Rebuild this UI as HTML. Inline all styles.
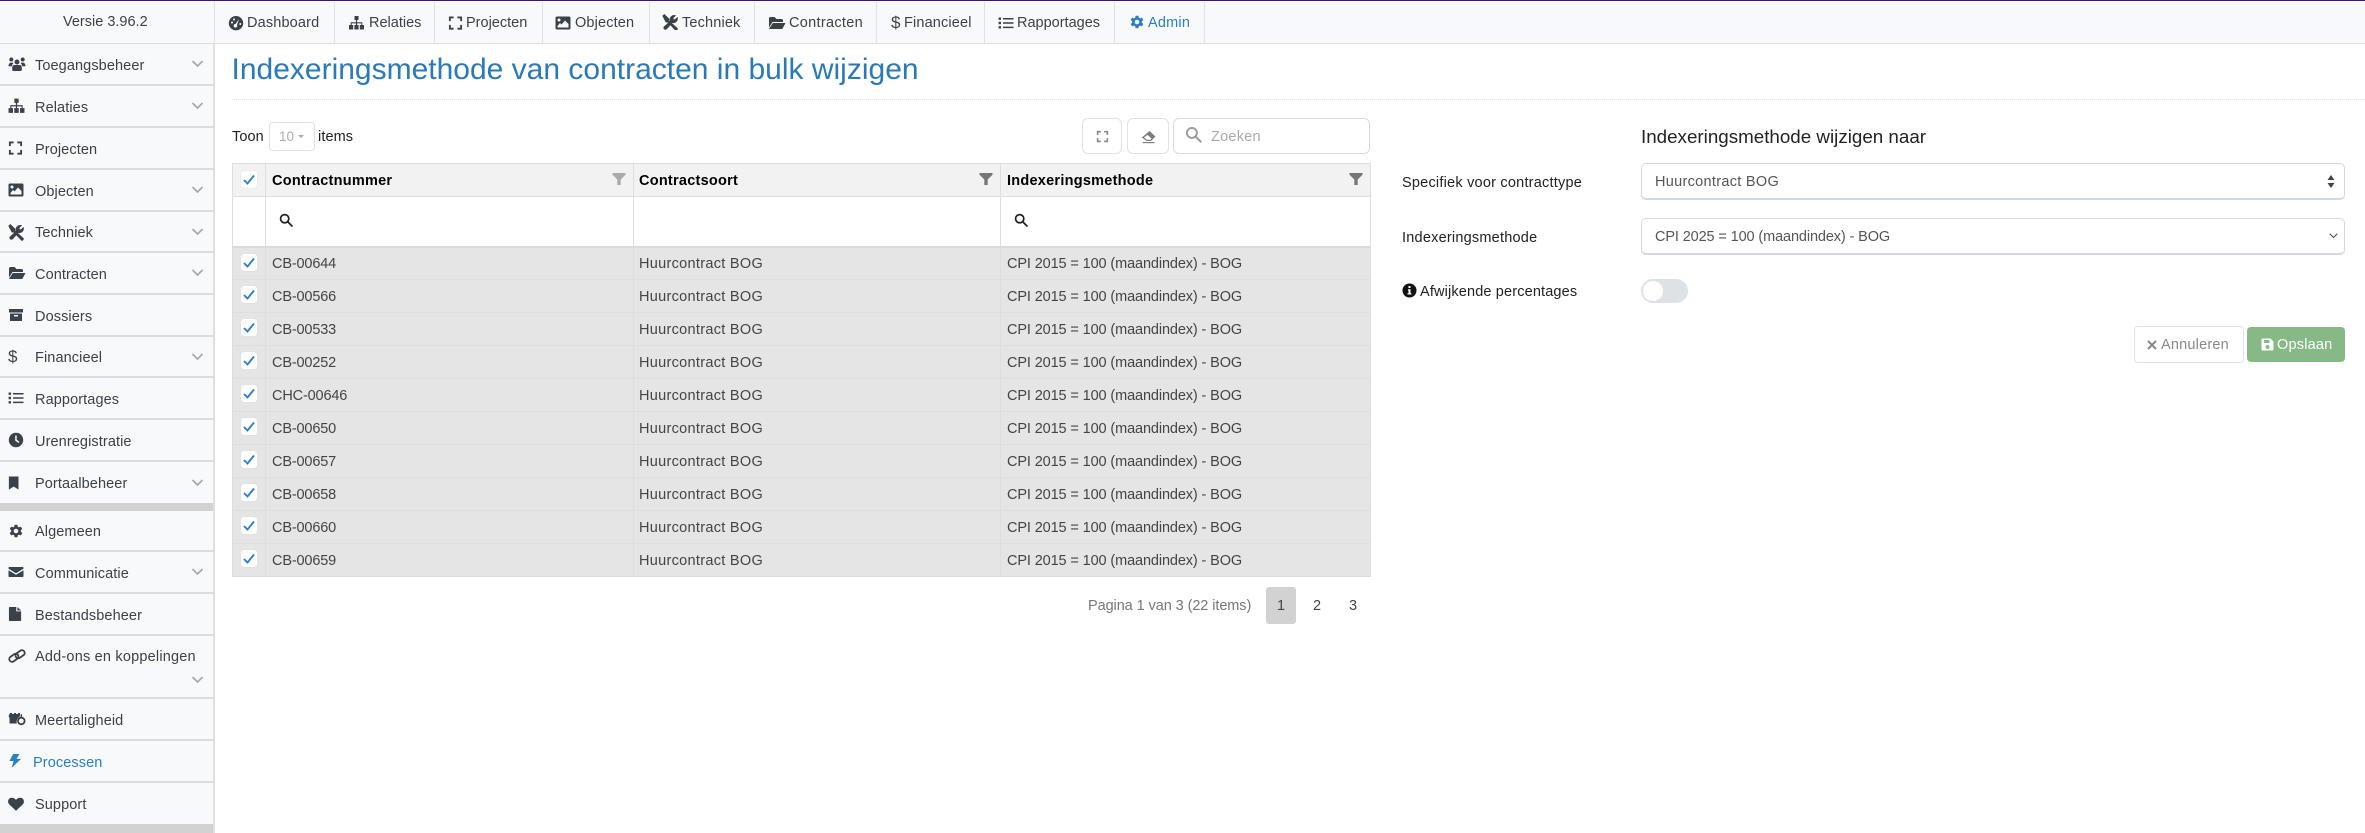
<!DOCTYPE html>
<html lang="nl"><head><meta charset="utf-8"><title>Indexeringsmethode van contracten in bulk wijzigen</title>
<style>
*{box-sizing:border-box}
html,body{margin:0;padding:0;width:2365px;height:833px;overflow:hidden;background:#fff;font-family:"Liberation Sans",sans-serif;font-size:14.5px;color:#3c4148}
.a{position:absolute;white-space:nowrap}
svg{display:block}
.ic{position:absolute;fill:currentColor}
#top{position:absolute;left:0;top:0;width:2365px;height:44px;background:#f8f9fb;border-top:1px solid #3a1678;border-bottom:1px solid #dcdcdc}
.nv{position:absolute;top:1px;height:42px;border-right:1px solid #e2e2e2;line-height:42px;color:#3c4148}
.nv span{position:absolute;top:0}
.nv svg{position:absolute;top:13px}
#side{position:absolute;left:0;top:44px;width:215px;height:789px;background:#f8f9fb;border-right:2px solid #e0e0e0}
.si{position:absolute;left:0;width:213px;border-bottom:2px solid #dcdcdc;color:#3c4148;letter-spacing:.1px}
.si span{position:absolute;left:35px;top:50%;margin-top:-9.5px;line-height:22px}
.si svg.ic{left:8px;top:50%;margin-top:-9px}
.si svg.ch{position:absolute;left:191px;top:50%;margin-top:-4px;fill:none;stroke:#a8a8a8;stroke-width:1.7}
.band{position:absolute;left:0;width:213px;background:#d2d2d2}
table{position:absolute;left:232px;top:163px;width:1138px;border-collapse:collapse;table-layout:fixed;color:#444}
td,th{padding:1px 0 0 6px;border:1px solid #dedede;height:33px;font-weight:normal;text-align:left;position:relative;white-space:nowrap}
th{background:#f2f2f2;color:#000;font-weight:bold;height:33px;letter-spacing:.25px;padding-top:2px}
tr.f td{height:50px;background:#fff;border-bottom:2px solid #dadada}
tr.r td{background:#e5e5e5}
tr.r td:nth-child(2){letter-spacing:-.15px}
tr.r td:nth-child(3){letter-spacing:.3px;padding-left:5px}
tr.r td:nth-child(4){letter-spacing:-.12px}
th:nth-child(3){padding-left:5px}
.cb{position:absolute;left:8px;top:6px;width:16px;height:17px;background:#fff;border-radius:3px;box-shadow:0 0 1px #ccc}
th .cb{top:7px}
.cb svg{position:absolute;left:2px;top:3px;fill:none;stroke:#2f7fc4;stroke-width:1.9}
.fi{position:absolute;top:8px;right:7px;fill:#777}
.se{position:absolute;left:13px;top:16px;fill:none;stroke:#222;stroke-width:2}
.box{position:absolute;background:#fff;border:1px solid #dfe2e6;border-radius:6px}
.sel{position:absolute;left:1641px;width:704px;height:37px;background:#fff;border:1px solid #d3d8de;border-bottom-width:2px;border-radius:5px;line-height:36px;padding-left:13px;color:#555}
.lb{position:absolute;left:1402px;color:#222;line-height:20px;letter-spacing:.22px}
</style></head><body>
<svg width="0" height="0" style="position:absolute"><defs>
<symbol id="dash" viewBox="0 0 16 16"><path fill-rule="evenodd" d="M8 1a7.2 7.2 0 1 1 0 14.4A7.2 7.2 0 0 1 8 1zM11 4.2 7.4 9a1.8 1.8 0 1 0 1.6.9zM4 6.5a1 1 0 1 0 0 2 1 1 0 0 0 0-2zM6 3.5a1 1 0 1 0 0 2 1 1 0 0 0 0-2zM12.3 8a1 1 0 1 0 0 2 1 1 0 0 0 0-2z"/></symbol>
<symbol id="site" viewBox="0 0 16 16"><path d="M6 1h4v4H8.6v2.2h5.2V10h1.7v4.5h-4.2V10h1.5V8.4H8.6V10h1.5v4.5H5.9V10h1.5V8.4H3.2V10h1.500v4.500H.5V10h1.700V7.200h5.200V5H6z"/></symbol>
<symbol id="exp" viewBox="0 0 16 16"><path d="M1 1h5v2H3v3H1zM10 1h5v5h-2V3h-3zM1 10h2v3h3v2H1zM13 10h2v5h-5v-2h3z"/></symbol>
<symbol id="img" viewBox="0 0 16 16"><path fill-rule="evenodd" d="M2 1.500h12A1.500 1.500 0 0 1 15.500 3v10a1.500 1.500 0 0 1-1.500 1.500H2A1.500 1.500 0 0 1 .5 13V3A1.500 1.500 0 0 1 2 1.500zM4 3.500a1.500 1.500 0 1 0 0 3 1.500 1.500 0 0 0 0-3zM10 5.500 6.500 9.500 5 8l-2.500 3v1.500h11V9z"/></symbol>
<symbol id="tools" viewBox="0 0 16 16"><path stroke="currentColor" stroke-width=".8" d="M.8 2 2.300.6 7 5l.1 2.100L15 14.200a1.200 1.200 0 0 1-1.800 1.600L6 8.200 4 8zM15.300 3.600a4 4 0 0 1-5 4.900L4.600 14.800a1.500 1.500 0 1 1-2.400-2l6.400-5.600a4 4 0 0 1 4.800-5.600L11 3.800l.3 1.700 1.700.3z"/></symbol>
<symbol id="fold" viewBox="0 0 18 16"><path d="M1 3.500C1 2.700 1.700 2 2.500 2h4l2 2h5c.8 0 1.500.7 1.500 1.500V7H4.500L1 12.500zM4.800 8H17.500l-3.200 6H.9z"/></symbol>
<symbol id="arch" viewBox="0 0 16 16"><path fill-rule="evenodd" d="M1 2h14v3.500H1zM2 6.500h12V14H2zM6 8v1.500h4V8z"/></symbol>
<symbol id="list" viewBox="0 0 16 16"><path d="M.6 2.500h2.400v2.400H.6zM.6 6.800h2.400v2.400H.6zM.6 11.100h2.400v2.400H.6zM5 3h10.500v1.500H5zM5 7.300h10.500v1.500H5zM5 11.600h10.500v1.500H5z"/></symbol>
<symbol id="clock" viewBox="0 0 16 16"><path fill-rule="evenodd" d="M8 .8a7.200 7.200 0 1 1 0 14.400A7.200 7.200 0 0 1 8 .8zM7.200 3.500v5.100l3.300 2.400.9-1.200-2.700-2V3.500z"/></symbol>
<symbol id="book" viewBox="0 0 16 16"><path d="M1 .5h11v15L6.500 12 1 15.500z"/></symbol>
<symbol id="cog" viewBox="0 0 16 16"><path fill-rule="evenodd" d="M6.600.8h2.800l.4 2 1.200.6 1.900-.8 1.400 2.400-1.500 1.300v1.400l1.500 1.300-1.400 2.400-1.900-.8-1.200.7-.4 2H6.600l-.4-2-1.200-.7-1.900.8-1.400-2.400L3.200 7.700V6.300L1.700 5l1.400-2.400 1.900.8 1.200-.6zM8 4.700a2.300 2.300 0 1 0 0 4.600 2.300 2.300 0 0 0 0-4.600z" transform="translate(0 1)"/></symbol>
<symbol id="mail" viewBox="0 0 16 16"><path d="M1.500 3h13c.6 0 1 .4 1 1v.6L8 9.200.5 4.600V4c0-.6.400-1 1-1zM.5 6.200 8 10.800l7.500-4.600V12c0 .6-.4 1-1 1h-13c-.6 0-1-.4-1-1z"/></symbol>
<symbol id="file" viewBox="0 0 16 16"><path d="M2 .5h6.800v4.700H14V14.500c0 .6-.4 1-1 1H2c-.6 0-1-.4-1-1v-13c0-.6.400-1 1-1zM10 .5l4 3.700h-4z"/></symbol>
<symbol id="link" viewBox="0 0 18 16"><g fill="none" stroke="currentColor" stroke-width="1.800"><rect x="1" y="7" width="10" height="5.500" rx="2.750" transform="rotate(-35 6 10)"/><rect x="7" y="3.500" width="10" height="5.500" rx="2.750" transform="rotate(-35 12 6)"/></g></symbol>
<symbol id="lang" viewBox="0 0 18 16"><path d="M2 2h2v1h2V2h2v1h2V2h2v2.200c0 .5 0 1-.5 1.500A6 6 0 0 0 8.800 12.500H1.500V7L.6 5zM13.300 5.800a4.200 4.200 0 1 1 0 8.400 4.200 4.200 0 0 1 0-8.400zm0 1.800a2.400 2.400 0 1 0 0 4.800 2.400 2.400 0 0 0 0-4.800z"/><path d="M12.600 3.300h1.500v3h-1.500z"/></symbol>
<symbol id="bolt" viewBox="0 0 16 16"><path d="M6 0h7L9.800 5.500H15L4 16l2.500-8H1.500z"/></symbol>
<symbol id="heart" viewBox="0 0 16 16"><path d="M8 14.800 1.300 8.500C-.8 6.300-.1 2.700 2.700 1.900c2-.6 4 .2 5.300 2 1.300-1.800 3.300-2.600 5.300-2 2.800.8 3.500 4.400 1.400 6.600z"/></symbol>
<symbol id="users" viewBox="0 0 18 16"><path d="M9 3.500a2.500 2.500 0 1 1 0 5 2.500 2.500 0 0 1 0-5zM3.300 1.500a2 2 0 1 1 0 4 2 2 0 0 1 0-4zM14.700 1.500a2 2 0 1 1 0 4 2 2 0 0 1 0-4zM.5 10.300c0-2 1-3.700 2.300-3.700h1.700l.9.500a4.500 4.500 0 0 0-1.500 3.200zM17.500 10.300c0-2-1-3.700-2.300-3.700h-1.700l-.9.500a4.500 4.500 0 0 1 1.500 3.200zM6.500 9h5c1.300 0 2.300 1 2.300 2.500V14c0 .6-.4 1-1 1H5.200c-.6 0-1-.4-1-1v-2.500C4.200 10 5.200 9 6.500 9z"/></symbol>
<symbol id="filt" viewBox="0 0 14 14"><path d="M.5 1h13v1.800L8.700 7.500V13H5.300V7.500L.5 2.800z"/></symbol>
<symbol id="mag" viewBox="0 0 16 16"><circle cx="6.500" cy="6.500" r="4.700"/><path d="M10 10l4.800 4.800" stroke-linecap="round"/></symbol>
<symbol id="chk" viewBox="0 0 12 11"><path d="M1 6l3.500 3.500L11 1.500"/></symbol>
<symbol id="chev" viewBox="0 0 12 8"><path d="M1 1l5 5 5-5"/></symbol>
</defs></svg>

<div id="top">
<div class="a" style="left:63px;top:0;line-height:42px">Versie 3.96.2</div>
<div class="a" style="left:214px;top:0;width:1px;height:42px;background:#e2e2e2"></div>
<div class="nv" style="left:215px;width:120px"><svg class="ic" style="left:13px" width="16" height="16"><use href="#dash"/></svg><span style="left:32px;letter-spacing:.15px">Dashboard</span></div>
<div class="nv" style="left:335px;width:100px"><svg class="ic" style="left:13px" width="17" height="16"><use href="#site"/></svg><span style="left:34px">Relaties</span></div>
<div class="nv" style="left:435px;width:108px"><svg class="ic" style="left:13px" width="15" height="16"><use href="#exp"/></svg><span style="left:31px">Projecten</span></div>
<div class="nv" style="left:543px;width:107px"><svg class="ic" style="left:12px" width="16" height="16"><use href="#img"/></svg><span style="left:32px;letter-spacing:.15px">Objecten</span></div>
<div class="nv" style="left:650px;width:105px"><svg class="ic" style="left:12px;top:12px" width="16" height="16"><use href="#tools"/></svg><span style="left:32px;letter-spacing:.15px">Techniek</span></div>
<div class="nv" style="left:755px;width:122px"><svg class="ic" style="left:13px" width="18" height="16"><use href="#fold"/></svg><span style="left:34px;letter-spacing:.3px">Contracten</span></div>
<div class="nv" style="left:877px;width:108px"><span style="left:14px;font-size:17px">$</span><span style="left:27px;letter-spacing:.15px">Financieel</span></div>
<div class="nv" style="left:985px;width:130px"><svg class="ic" style="left:13px" width="16" height="16"><use href="#list"/></svg><span style="left:32px">Rapportages</span></div>
<div class="nv" style="left:1115px;width:90px;color:#2a7fc1"><svg class="ic" style="left:14px;top:12px" width="16" height="16"><use href="#cog"/></svg><span style="left:33px;letter-spacing:.2px">Admin</span></div>
</div>

<div id="side">
<div class="si" style="top:0;height:42px"><svg class="ic" width="18" height="18"><use href="#users"/></svg><span>Toegangsbeheer</span><svg class="ch" width="13" height="8"><use href="#chev"/></svg></div>
<div class="si" style="top:42px;height:42px"><svg class="ic" width="17" height="18"><use href="#site"/></svg><span>Relaties</span><svg class="ch" width="13" height="8"><use href="#chev"/></svg></div>
<div class="si" style="top:84px;height:42px"><svg class="ic" width="15" height="18"><use href="#exp"/></svg><span>Projecten</span></div>
<div class="si" style="top:126px;height:42px"><svg class="ic" width="16" height="18"><use href="#img"/></svg><span>Objecten</span><svg class="ch" width="13" height="8"><use href="#chev"/></svg></div>
<div class="si" style="top:168px;height:41px"><svg class="ic" width="16" height="18"><use href="#tools"/></svg><span>Techniek</span><svg class="ch" width="13" height="8"><use href="#chev"/></svg></div>
<div class="si" style="top:209px;height:42px"><svg class="ic" width="18" height="18"><use href="#fold"/></svg><span>Contracten</span><svg class="ch" width="13" height="8"><use href="#chev"/></svg></div>
<div class="si" style="top:251px;height:42px"><svg class="ic" width="16" height="18"><use href="#arch"/></svg><span>Dossiers</span></div>
<div class="si" style="top:293px;height:41px"><span style="left:8px;font-size:17px;margin-top:-11px">$</span><span>Financieel</span><svg class="ch" width="13" height="8"><use href="#chev"/></svg></div>
<div class="si" style="top:334px;height:42px"><svg class="ic" width="16" height="18"><use href="#list"/></svg><span>Rapportages</span></div>
<div class="si" style="top:376px;height:42px"><svg class="ic" width="16" height="18"><use href="#clock"/></svg><span>Urenregistratie</span></div>
<div class="si" style="top:418px;height:41px;border-bottom:0"><svg class="ic" width="14" height="18"><use href="#book"/></svg><span>Portaalbeheer</span><svg class="ch" width="13" height="8"><use href="#chev"/></svg></div>
<div class="band" style="top:459px;height:8px"></div>
<div class="si" style="top:467px;height:41px"><svg class="ic" width="16" height="18"><use href="#cog"/></svg><span>Algemeen</span></div>
<div class="si" style="top:508px;height:42px"><svg class="ic" width="16" height="18"><use href="#mail"/></svg><span>Communicatie</span><svg class="ch" width="13" height="8"><use href="#chev"/></svg></div>
<div class="si" style="top:550px;height:42px"><svg class="ic" width="15" height="18"><use href="#file"/></svg><span>Bestandsbeheer</span></div>
<div class="si" style="top:592px;height:63px"><svg class="ic" style="margin-top:-20px" width="18" height="18"><use href="#link"/></svg><span style="margin-top:-20.5px;letter-spacing:.2px">Add-ons en koppelingen</span><svg class="ch" style="margin-top:9px" width="13" height="8"><use href="#chev"/></svg></div>
<div class="si" style="top:655px;height:42px"><svg class="ic" width="18" height="18"><use href="#lang"/></svg><span>Meertaligheid</span></div>
<div class="si" style="top:697px;height:42px;color:#2a7fc1"><svg class="ic" width="14" height="18"><use href="#bolt"/></svg><span style="left:33px">Processen</span></div>
<div class="si" style="top:739px;height:41px;border-bottom:0"><svg class="ic" width="16" height="18"><use href="#heart"/></svg><span>Support</span></div>
<div class="band" style="top:780px;height:9px"></div>
</div>

<div class="a" style="left:231.500px;top:50px;font-size:30px;line-height:40px;color:#2a7ab9">Indexeringsmethode van contracten in bulk wijzigen</div>
<div class="a" style="left:232px;top:99px;width:2133px;border-top:1px dotted #e4e4e4"></div>

<div class="a" style="left:232px;top:127px;line-height:20px;color:#222;letter-spacing:.1px">Toon</div>
<div class="box" style="left:269px;top:122px;width:46px;height:29px;border-radius:4px"></div>
<div class="a" style="left:279px;top:127px;line-height:20px;color:#aaa;font-size:13.500px">10</div>
<div class="a" style="left:298px;top:135px;border:3px solid transparent;border-top:3px solid #aaa;border-bottom:0"></div>
<div class="a" style="left:318px;top:127px;line-height:20px;color:#222;letter-spacing:.1px">items</div>

<div class="box" style="left:1082px;top:118px;width:40px;height:36px"><svg class="ic" style="left:13px;top:11px;color:#888" width="13" height="13"><use href="#exp"/></svg></div>
<div class="box" style="left:1127px;top:118px;width:42px;height:36px"><svg style="position:absolute;left:13px;top:11px" width="15" height="14" viewBox="0 0 15 14"><path fill="#7d7d7d" d="M8.500 1 14.500 6.500 10 11H5.500L.8 7.500zM3 7.500 5.800 9.800h3.500l1.200-1.200-4-3.700z"/><path fill="#7d7d7d" d="M1.500 12h12v1.200h-12z"/></svg></div>
<div class="box" style="left:1173px;top:118px;width:197px;height:36px;border-color:#d8dbe0"><svg style="position:absolute;left:11px;top:7px;fill:none;stroke:#999;stroke-width:1.800" width="17" height="17"><use href="#mag"/></svg><span class="a" style="left:37px;top:8px;line-height:20px;color:#aaa;letter-spacing:.25px">Zoeken</span></div>

<table>
<colgroup><col style="width:33px"><col style="width:368px"><col style="width:367px"><col style="width:370px"></colgroup>
<tr><th><div class="cb"><svg width="12" height="11"><use href="#chk"/></svg></div></th><th>Contractnummer<svg class="fi" style="fill:#aaa" width="14" height="14"><use href="#filt"/></svg></th><th>Contractsoort<svg class="fi" width="14" height="14"><use href="#filt"/></svg></th><th>Indexeringsmethode<svg class="fi" width="14" height="14"><use href="#filt"/></svg></th></tr>
<tr class="f"><td></td><td><svg class="se" width="14" height="14"><use href="#mag"/></svg></td><td></td><td><svg class="se" width="14" height="14"><use href="#mag"/></svg></td></tr>
<tr class="r"><td><div class="cb"><svg width="12" height="11"><use href="#chk"/></svg></div></td><td>CB-00644</td><td>Huurcontract BOG</td><td>CPI 2015 = 100 (maandindex) - BOG</td></tr>
<tr class="r"><td><div class="cb"><svg width="12" height="11"><use href="#chk"/></svg></div></td><td>CB-00566</td><td>Huurcontract BOG</td><td>CPI 2015 = 100 (maandindex) - BOG</td></tr>
<tr class="r"><td><div class="cb"><svg width="12" height="11"><use href="#chk"/></svg></div></td><td>CB-00533</td><td>Huurcontract BOG</td><td>CPI 2015 = 100 (maandindex) - BOG</td></tr>
<tr class="r"><td><div class="cb"><svg width="12" height="11"><use href="#chk"/></svg></div></td><td>CB-00252</td><td>Huurcontract BOG</td><td>CPI 2015 = 100 (maandindex) - BOG</td></tr>
<tr class="r"><td><div class="cb"><svg width="12" height="11"><use href="#chk"/></svg></div></td><td>CHC-00646</td><td>Huurcontract BOG</td><td>CPI 2015 = 100 (maandindex) - BOG</td></tr>
<tr class="r"><td><div class="cb"><svg width="12" height="11"><use href="#chk"/></svg></div></td><td>CB-00650</td><td>Huurcontract BOG</td><td>CPI 2015 = 100 (maandindex) - BOG</td></tr>
<tr class="r"><td><div class="cb"><svg width="12" height="11"><use href="#chk"/></svg></div></td><td>CB-00657</td><td>Huurcontract BOG</td><td>CPI 2015 = 100 (maandindex) - BOG</td></tr>
<tr class="r"><td><div class="cb"><svg width="12" height="11"><use href="#chk"/></svg></div></td><td>CB-00658</td><td>Huurcontract BOG</td><td>CPI 2015 = 100 (maandindex) - BOG</td></tr>
<tr class="r"><td><div class="cb"><svg width="12" height="11"><use href="#chk"/></svg></div></td><td>CB-00660</td><td>Huurcontract BOG</td><td>CPI 2015 = 100 (maandindex) - BOG</td></tr>
<tr class="r"><td><div class="cb"><svg width="12" height="11"><use href="#chk"/></svg></div></td><td>CB-00659</td><td>Huurcontract BOG</td><td>CPI 2015 = 100 (maandindex) - BOG</td></tr>
</table>

<div class="a" style="left:1088px;top:596px;line-height:20px;color:#777;letter-spacing:-.08px">Pagina 1 van 3 (22 items)</div>
<div class="a" style="left:1266px;top:587px;width:30px;height:37px;background:#d2d2d2;border-radius:3px;text-align:center;line-height:38px;color:#444">1</div>
<div class="a" style="left:1313px;top:587px;line-height:38px;color:#444">2</div>
<div class="a" style="left:1349px;top:587px;line-height:38px;color:#444">3</div>

<div class="a" style="left:1641px;top:125px;font-size:18.800px;line-height:24px;color:#222">Indexeringsmethode wijzigen naar</div>
<div class="lb" style="top:172.500px">Specifiek voor contracttype</div>
<div class="sel" style="top:163px;letter-spacing:.3px">Huurcontract BOG<svg style="position:absolute;right:9px;top:11px" width="8" height="13" viewBox="0 0 8 13"><path fill="#444" d="M4 0l3.500 5H.5zM4 13 .5 8h7z"/></svg></div>
<div class="lb" style="top:228px">Indexeringsmethode</div>
<div class="sel" style="top:218px;letter-spacing:-.12px">CPI 2025 = 100 (maandindex) - BOG<svg style="position:absolute;right:6px;top:14px;fill:none;stroke:#444;stroke-width:1.300" width="9" height="6"><use href="#chev"/></svg></div>
<svg class="a" style="left:1402px;top:283px" width="15" height="15" viewBox="0 0 15 15"><circle cx="7.500" cy="7.500" r="7" fill="#111"/><path fill="#fff" d="M6.500 3h2v2h-2zM6 6.300h2.500v4H9.500v1.200h-4v-1.200h1V7.500H6z"/></svg>
<div class="lb" style="left:1420px;top:281.500px;letter-spacing:.15px">Afwijkende percentages</div>
<div class="a" style="left:1641px;top:279px;width:47px;height:24px;border-radius:12px;background:#dee2e6"><div class="a" style="left:2px;top:2px;width:20px;height:20px;border-radius:50%;background:#fff"></div></div>

<div class="box" style="left:2134px;top:326px;width:110px;height:37px;border-radius:4px;color:#888;line-height:37px"><svg style="position:absolute;left:12px;top:13px;fill:none;stroke:#888;stroke-width:2" width="10" height="10" viewBox="0 0 10 10"><path d="M1 1l8 8M9 1l-8 8"/></svg><span class="a" style="left:26px;top:0;letter-spacing:.2px">Annuleren</span></div>
<div class="a" style="left:2247px;top:327px;width:98px;height:35px;background:#86b985;border-radius:4px;color:#fff;line-height:37px"><svg style="position:absolute;left:14px;top:11px" width="13" height="13" viewBox="0 0 13 13"><path fill="#fff" fill-rule="evenodd" d="M1.500.5h8l3 3v8a1 1 0 0 1-1 1h-10a1 1 0 0 1-1-1v-10a1 1 0 0 1 1-1zM3 2v3h5.500V2zM6.500 7a2 2 0 1 0 0 4 2 2 0 0 0 0-4z"/></svg><span class="a" style="left:30px;top:0;letter-spacing:.2px">Opslaan</span></div>
</body></html>
